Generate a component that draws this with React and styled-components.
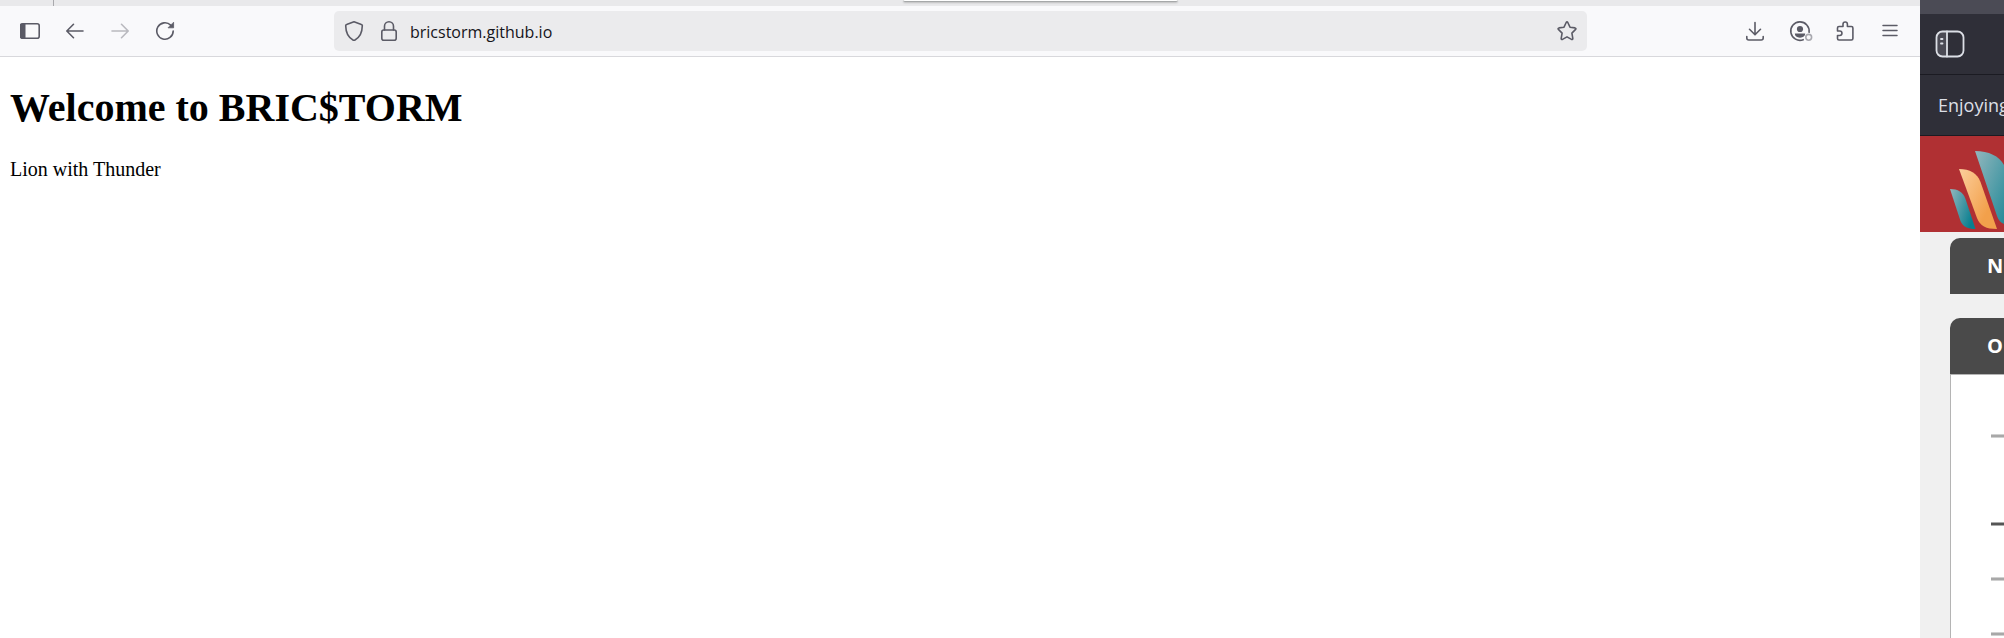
import React from 'react';
import styled, { createGlobalStyle } from 'styled-components';

const GlobalStyle = createGlobalStyle`
  *, *::before, *::after { box-sizing: border-box; }
  body { margin: 0; background: #fff; }
`;

const Desktop = styled.div`
  display: flex;
  height: 100vh;
  overflow: hidden;
`;

const BrowserWindow = styled.div`
  flex: 1;
  min-width: 0;
  display: flex;
  flex-direction: column;
  background: #fff;
`;

const TabStrip = styled.div`
  position: relative;
  height: 6px;
  padding-left: 53px;
  background: #e9e9eb;
`;

const TabDivider = styled.div`
  width: 1px;
  height: 6px;
  background: #a9a9ad;
`;

const Popup = styled.div`
  position: absolute;
  top: 0;
  left: 903px;
  width: 275px;
  height: 2px;
  background: #fff;
  border-bottom: 1px solid #a6a8a9;
  border-radius: 0 0 2px 2px;
  box-shadow: 0 1px 2px #0003;
`;

const Toolbar = styled.header`
  display: grid;
  grid-template-columns: 334px 1fr 333px;
  align-items: center;
  height: 51px;
  background: #f9f9fb;
  border-bottom: 1px solid #d8d8dc;
`;

const ButtonGroup = styled.div`
  display: flex;
  gap: 5px;
  padding: 0 10px;
  justify-content: ${(p) => (p.$end ? 'flex-end' : 'flex-start')};
`;

const IconButton = styled.button`
  display: grid;
  place-items: center;
  width: 40px;
  height: 40px;
  padding: 0;
  border: 0;
  border-radius: 5px;
  background: transparent;
  color: #5b5b66;
  opacity: ${(p) => (p.disabled ? 0.4 : 1)};
`;

const UrlBar = styled.div`
  display: flex;
  align-items: center;
  height: 40px;
  background: #ebebed;
  border-radius: 5px;
`;

const UrlButton = styled(IconButton)`
  width: ${(p) => p.$width}px;
`;

const UrlInput = styled.input`
  flex: 1;
  min-width: 0;
  height: 40px;
  padding: 2px 0 0;
  margin-left: 6px;
  border: 0;
  outline: 0;
  background: transparent;
  color: #15141a;
  font: 16px/24px "Open Sans", "Noto Sans", sans-serif;
`;

const Page = styled.main`
  padding: 28px 10px;
  color: #000;
  font-family: "Liberation Serif", "Times New Roman", serif;
`;

const Title = styled.h1`
  margin: 0 0 26px;
  font-size: 40px;
  line-height: 46px;
  font-weight: 700;
`;

const Text = styled.p`
  margin: 0;
  font-size: 20px;
  line-height: 24px;
`;

const SideWindow = styled.aside`
  flex: 0 0 84px;
  display: flex;
  flex-direction: column;
  overflow: hidden;
  background: #f0f0f0;
`;

const SideTitle = styled.div`
  height: 14px;
  background: #4b4b55;
`;

const SideBar = styled.div`
  display: flex;
  align-items: center;
  height: 61px;
  padding-left: ${(p) => p.$indent}px;
  background: #2f2f38;
  border-bottom: 1px solid #1b1b22;
`;

const SideButton = styled(IconButton)`
  width: 30px;
  color: #dcdfe6;
`;

const Notice = styled.span`
  color: #dcdfe6;
  font: 18px/24px "Open Sans", "Noto Sans", sans-serif;
  white-space: nowrap;
`;

const Banner = styled.div`
  height: 96px;
  padding: 14px 0 0 30px;
  background: #b03033;
`;

const Cards = styled.div`
  flex: 1;
  display: flex;
  flex-direction: column;
  gap: 24px;
  padding: 6px 0 0 30px;
`;

const Card = styled.section`
  display: flex;
  flex-direction: column;
  flex: ${(p) => (p.$open ? 1 : 'none')};
`;

const CardTitle = styled.h2`
  margin: 0;
  padding: 16px 0 16px 37px;
  background: #4a4a4a;
  border-radius: 10px 0 0 0;
  color: #fff;
  font: 700 20px/24px "Open Sans", sans-serif;
`;

const CardBody = styled.div`
  flex: 1;
  padding: 59px 0 0 40px;
  background: #fff;
  border: solid #b4b4b4;
  border-width: 1px 0 0 1px;
`;

const Rule = styled.div`
  height: 4px;
  margin-bottom: ${(p) => p.$gap}px;
  background: ${(p) => (p.$dark ? '#555' : '#a8a8a8')};
  border: solid ${(p) => (p.$dark ? '#aaa' : '#d0d0d0')};
  border-width: 1px 0;
`;

const Icon = ({ size = 20, width = 1.6, children }) => (
  <svg
    width={size}
    height={size}
    viewBox={`0 0 ${size} ${size}`}
    fill="none"
    stroke="currentColor"
    strokeWidth={width}
    strokeLinecap="round"
    strokeLinejoin="round"
    aria-hidden="true"
  >
    {children}
  </svg>
);

const SidebarIcon = () => (
  <Icon>
    <rect x="0.8" y="2.8" width="18.4" height="14.4" rx="2" />
    <path d="M1 3h4v14H1z" fill="currentColor" strokeWidth="1" />
  </Icon>
);
const BackIcon = () => (
  <Icon>
    <path d="M18 10H2M8.5 3.3L1.8 10l6.7 6.7" />
  </Icon>
);
const ForwardIcon = () => (
  <Icon>
    <path d="M2 10h16M11.5 3.3l6.7 6.7-6.7 6.7" />
  </Icon>
);
const ReloadIcon = () => (
  <Icon>
    <path d="M18.2 10A8.2 8.2 0 1 1 15.7 4.1" />
    <path d="M18.6 1.6v5.2h-5.2z" fill="currentColor" strokeWidth="0.8" />
  </Icon>
);
const ShieldIcon = () => (
  <Icon>
    <path d="M10 .8L17.4 3.6c.6.2 1 .6.9 1.2C18.2 11.5 15.5 16.8 10.7 19.2q-.7.3-1.4 0C4.5 16.8 1.8 11.5 1.7 4.8c0-.6.3-1 .9-1.2z" />
  </Icon>
);
const LockIcon = () => (
  <Icon>
    <rect x="2.8" y="9" width="14.4" height="10.2" rx="2" />
    <path d="M5.5 9V5.3a4.5 4.5 0 0 1 9 0V9" />
  </Icon>
);
const StarIcon = () => (
  <Icon>
    <path d="M9.2 1.500q.8-1.300 1.600 0l2.200 4.700 5 .7q1.500.4.600 1.500l-3.700 3.700.9 5.300q0 1.400-1.300 1L10 15.900l-4.500 2.500q-1.300.4-1.300-1l.9-5.300L1.400 8.400Q.5 7.300 2 6.900l5-.7z" />
  </Icon>
);
const DownloadIcon = () => (
  <Icon>
    <path d="M10 1.500v12M4.500 8.300l5.500 5.500 5.500-5.500M1.800 15.500v1.500q0 2 2 2h12.400q2 0 2-2v-1.500" />
  </Icon>
);
const AccountIcon = () => (
  <Icon size={26}>
    <path d="M16.200 21.700A9.200 9.200 0 1 1 22.100 14.300" />
    <g fill="currentColor" stroke="none">
      <circle cx="13" cy="11" r="3.100" />
      <path d="M7.800 15.600h10.400c0 2.500-2 4.100-5.200 4.100s-5.200-1.600-5.200-4.100z" />
    </g>
    <circle cx="21.700" cy="19.300" r="2.900" opacity="0.500" fill="#f9f9fb" />
  </Icon>
);
const PuzzleIcon = () => (
  <Icon>
    <path d="M2.500 10V7q0-1.500 1.500-1.500h4V3.200a2.200 2.200 0 0 1 4.400 0v2.300h4q1.500 0 1.500 1.500v10.500q0 1.500-1.500 1.500H4q-1.500 0-1.500-1.500v-3h2.200a2.200 2.200 0 0 0 0-4.500z" />
  </Icon>
);
const MenuIcon = () => (
  <Icon width={1.5}>
    <path d="M3 4.500h14M3 9.500h14M3 14.500h14" />
  </Icon>
);
const PanelIcon = () => (
  <Icon size={30} width={1.8}>
    <path d="M7 2.500h5v25H7q-5 0-5-5v-15q0-5 5-5z" fill="#4b4b55" stroke="none" />
    <rect x="1.500" y="2.500" width="27" height="25" rx="6" />
    <path d="M12 2.500v25M6 10h1.500M6 14.500h1.500" />
  </Icon>
);

const BrandMark = () => (
  <svg width="54" height="82" viewBox="0 0 54 82" aria-hidden="true">
    <defs>
      <linearGradient id="teal" x1="0" y1="0" x2="1" y2="0.500">
        <stop offset="0" stopColor="#93b7bd" />
        <stop offset="1" stopColor="#087f90" />
      </linearGradient>
      <linearGradient id="gold" x1="0" y1="0" x2="1" y2="0.800">
        <stop offset="0" stopColor="#fccf9c" />
        <stop offset="0.800" stopColor="#f2a04b" />
      </linearGradient>
    </defs>
    <path fill="url(#teal)" d="M0 39c8 0 13 3 15.500 10L25.500 79C18 79 13 77 10.500 71z" />
    <path fill="url(#gold)" d="M9 19c11 0 18 4 21.500 13L47 79c-11 0-17-3-20-11z" />
    <path fill="url(#teal)" d="M25 1c14 0 24 5 29 14l30 60H60c-7 0-11-3-13-9z" />
  </svg>
);

export default function App() {
  return (
    <Desktop>
      <GlobalStyle />
      <BrowserWindow>
        <TabStrip>
          <TabDivider />
          <Popup />
        </TabStrip>
        <Toolbar>
          <ButtonGroup>
            <IconButton aria-label="Show sidebar"><SidebarIcon /></IconButton>
            <IconButton aria-label="Back"><BackIcon /></IconButton>
            <IconButton aria-label="Forward" disabled><ForwardIcon /></IconButton>
            <IconButton aria-label="Reload"><ReloadIcon /></IconButton>
          </ButtonGroup>
          <UrlBar>
            <UrlButton $width={40} aria-label="Tracking protection"><ShieldIcon /></UrlButton>
            <UrlButton $width={30} aria-label="Connection secure"><LockIcon /></UrlButton>
            <UrlInput aria-label="Address" defaultValue="bricstorm.github.io" spellCheck={false} />
            <UrlButton $width={40} aria-label="Bookmark this page"><StarIcon /></UrlButton>
          </UrlBar>
          <ButtonGroup $end>
            <IconButton aria-label="Downloads"><DownloadIcon /></IconButton>
            <IconButton aria-label="Account"><AccountIcon /></IconButton>
            <IconButton aria-label="Extensions"><PuzzleIcon /></IconButton>
            <IconButton aria-label="Application menu"><MenuIcon /></IconButton>
          </ButtonGroup>
        </Toolbar>
        <Page>
          <Title>Welcome to BRIC$TORM</Title>
          <Text>Lion with Thunder</Text>
        </Page>
      </BrowserWindow>
      <SideWindow>
        <SideTitle />
        <SideBar $indent={15}>
          <SideButton aria-label="Toggle panel"><PanelIcon /></SideButton>
        </SideBar>
        <SideBar $indent={18}>
          <Notice>Enjoying</Notice>
        </SideBar>
        <Banner><BrandMark /></Banner>
        <Cards>
          <Card>
            <CardTitle>N</CardTitle>
          </Card>
          <Card $open>
            <CardTitle>O</CardTitle>
            <CardBody>
              <Rule $gap={84} />
              <Rule $gap={51} $dark />
              <Rule $gap={51} />
              <Rule $gap={0} />
            </CardBody>
          </Card>
        </Cards>
      </SideWindow>
    </Desktop>
  );
}
